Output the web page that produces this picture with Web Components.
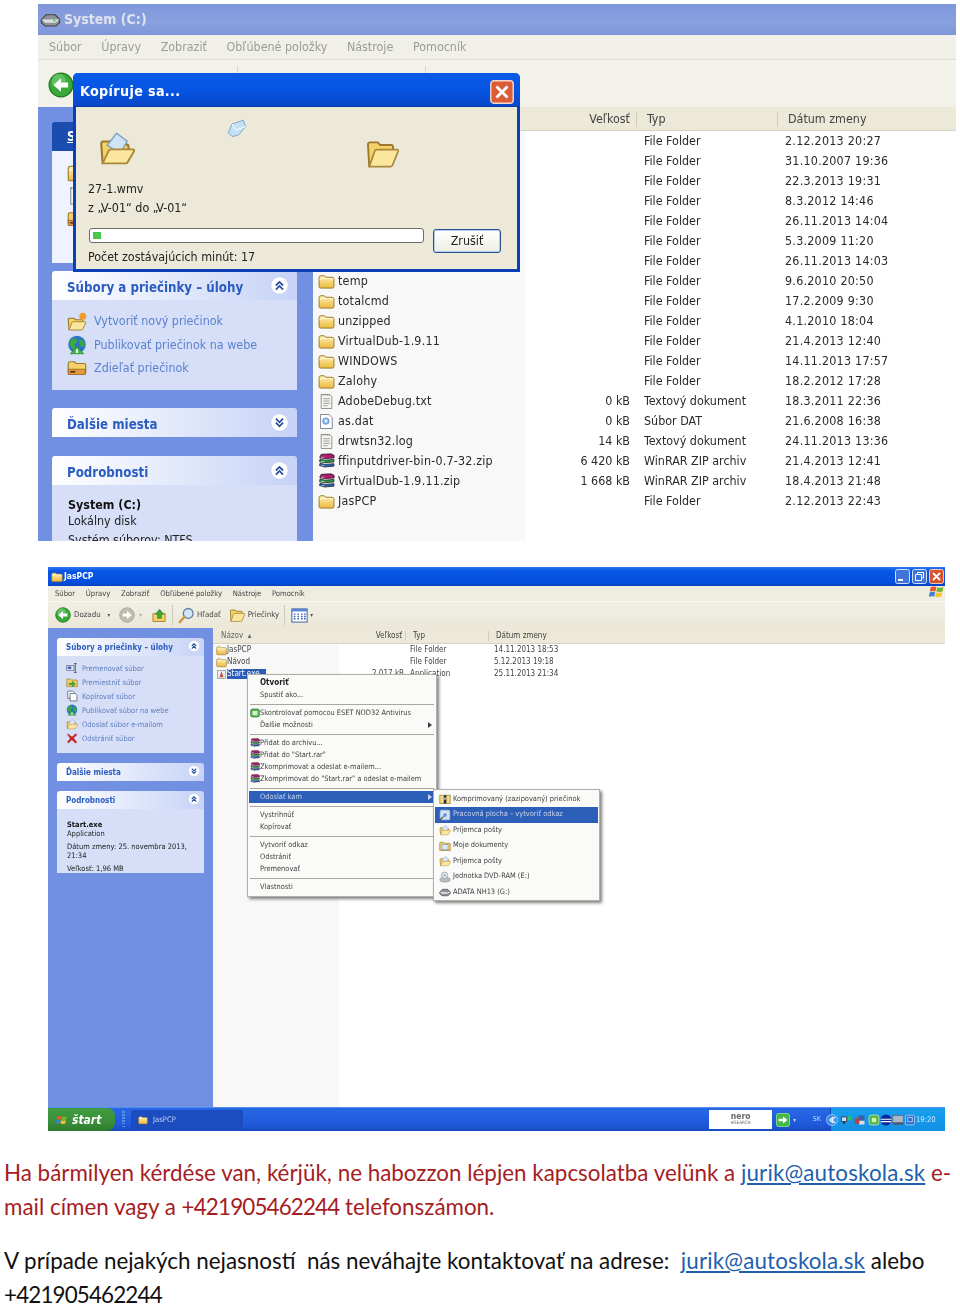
<!DOCTYPE html>
<html lang="sk">
<head>
<meta charset="utf-8">
<title>Kopírovanie súborov</title>
<style>
  html, body { margin: 0; background: #fff; }
  body { width: 960px; height: 1306px; overflow: hidden; }
</style>
</head>
<body>

<xp-explorer id="system" style="--w:918px;--h:537px;--m:4px 0 0 38px;--ui:12.4px;--row-h:20px;--blur:.4px;
  --title-h:31px;--title-bg:linear-gradient(#7f97dc,#8aa0dd 60%,#7d95d8);--title-color:#dfe3ee;--title-size:14px;--title-weight:700;--title-pad:2px;--title-gap:3px;
  --menu-h:25px;--menu-bg:#f1f0e8;--menu-color:#9c9c98;--menu-size:12.4px;--menu-gap:19.6px;--menu-pad:11px;--bar-line:#dddcd2;
  --tool-h:47px;--tool-bg:#f2f1ea;
  --side-w:275px;--side-pad:15px 0 0 14px;--panel-gap:18px;--panel-w:245px;
  --head-h:29px;--head-size:13.2px;--head-pad:15px;--head-top:4px;--chev:19px;--chev-right:8px;--chev-top:5px;
  --task-h:23.4px;--task-size:12.4px;--task-icon:20px;--task-gap:7px;--body-pad:10px 0 0 15px;--task-color:#5b82cf;
  --list-head-h:24px;--head-top-pad:2px;--shade:212px;
  --cols:207px 105px 155px 1fr;--row-pad:5px;--name-gap:3px;--name-icon:17px;--type-pad:14px;--date-ls:.25px;--name-ls:.2px;
  --head-cols:323px 141px 140px 1fr;--head-text:10px;--head-r:6px;--list-color:#2a2a2a;">
  <xp-icon slot="title-icon" name="drive" size="21"></xp-icon>
  <span slot="title">System (C:)</span>
  <span slot="menu">Súbor</span><span slot="menu">Úpravy</span><span slot="menu">Zobraziť</span><span slot="menu">Obľúbené položky</span><span slot="menu">Nástroje</span><span slot="menu">Pomocník</span>
  <system-tools slot="tools"></system-tools>

  <xp-panel slot="side" heading="S" primary style="--panel-h:131px;--head-top:0px"><xp-task icon="folder"></xp-task><xp-task icon="txt"></xp-task><xp-task icon="share"></xp-task></xp-panel>
  <xp-panel slot="side" heading="Súbory a priečinky – úlohy" dir="up">
    <xp-task icon="newfolder">Vytvoriť nový priečinok</xp-task>
    <xp-task icon="globe">Publikovať priečinok na webe</xp-task>
    <xp-task icon="share">Zdieľať priečinok</xp-task>
    <div style="height:10px"></div>
  </xp-panel>
  <xp-panel slot="side" heading="Ďalšie miesta" dir="down"></xp-panel>
  <xp-panel slot="side" heading="Podrobnosti" dir="up" style="--body-pad:12px 0 0 16px;margin-top:1px">
    <xp-detail><b>System (C:)</b><br>Lokálny disk</xp-detail>
    <xp-detail style="margin-top:3px">Systém súborov: NTFS</xp-detail>
  </xp-panel>

  <span slot="head" class="r">Veľkosť</span><span slot="head">Typ</span><span slot="head">Dátum zmeny</span>

  <file-row slot="rows" type="File Folder" date="2.12.2013 20:27"></file-row>
  <file-row slot="rows" type="File Folder" date="31.10.2007 19:36"></file-row>
  <file-row slot="rows" type="File Folder" date="22.3.2013 19:31"></file-row>
  <file-row slot="rows" type="File Folder" date="8.3.2012 14:46"></file-row>
  <file-row slot="rows" type="File Folder" date="26.11.2013 14:04"></file-row>
  <file-row slot="rows" type="File Folder" date="5.3.2009 11:20"></file-row>
  <file-row slot="rows" type="File Folder" date="26.11.2013 14:03"></file-row>
  <file-row slot="rows" icon="folder" name="temp" type="File Folder" date="9.6.2010 20:50"></file-row>
  <file-row slot="rows" icon="folder" name="totalcmd" type="File Folder" date="17.2.2009 9:30"></file-row>
  <file-row slot="rows" icon="folder" name="unzipped" type="File Folder" date="4.1.2010 18:04"></file-row>
  <file-row slot="rows" icon="folder" name="VirtualDub-1.9.11" type="File Folder" date="21.4.2013 12:40"></file-row>
  <file-row slot="rows" icon="folder" name="WINDOWS" type="File Folder" date="14.11.2013 17:57"></file-row>
  <file-row slot="rows" icon="folder" name="Zalohy" type="File Folder" date="18.2.2012 17:28"></file-row>
  <file-row slot="rows" icon="txt" name="AdobeDebug.txt" size="0 kB" type="Textový dokument" date="18.3.2011 22:36"></file-row>
  <file-row slot="rows" icon="dat" name="as.dat" size="0 kB" type="Súbor DAT" date="21.6.2008 16:38"></file-row>
  <file-row slot="rows" icon="txt" name="drwtsn32.log" size="14 kB" type="Textový dokument" date="24.11.2013 13:36"></file-row>
  <file-row slot="rows" icon="rar" name="ffinputdriver-bin-0.7-32.zip" size="6 420 kB" type="WinRAR ZIP archiv" date="21.4.2013 12:41"></file-row>
  <file-row slot="rows" icon="rar" name="VirtualDub-1.9.11.zip" size="1 668 kB" type="WinRAR ZIP archiv" date="18.4.2013 21:48"></file-row>
  <file-row slot="rows" icon="folder" name="JasPCP" type="File Folder" date="2.12.2013 22:43"></file-row>

  <copy-dialog></copy-dialog>
</xp-explorer>

<xp-explorer id="jaspcp" style="--w:897px;--h:564px;--m:26px 0 0 48px;--ui:8px;--row-h:12px;--blur:.5px;
  --title-h:19px;--title-bg:linear-gradient(#2a7cf0,#0a55e6 20%,#0350e0 80%,#0a3fc0);--title-color:#fff;--title-size:8.5px;--title-weight:700;--title-pad:3px;--title-gap:1px;
  --menu-h:16px;--menu-bg:#efece0;--menu-color:#444;--menu-size:7.6px;--menu-gap:10.8px;--menu-pad:7px;--bar-line:#f7f6ee;
  --tool-h:26px;--tool-bg:linear-gradient(#f1efe5,#ebe8d9);
  --side-w:165px;--side-pad:10px 0 0 9px;--panel-gap:10px;--panel-w:147px;
  --head-h:18px;--head-size:8px;--head-pad:9px;--head-top:1px;--chev:12px;--chev-right:4px;--chev-top:2px;
  --task-h:14px;--task-size:7.5px;--task-icon:12px;--task-gap:4px;--body-pad:5px 0 0 9px;--task-color:#5f7fc0;
  --list-head-h:16px;--head-top-pad:1px;--shade:126px;
  --cols:126px 62px 90px 1fr;--row-pad:3px;--name-gap:0px;--name-icon:11px;--type-pad:6px;--date-ls:0px;--name-ls:0px;
  --head-cols:126px 66px 83px 1fr;--head-text:7px;--head-r:3px;--list-color:#444;">
  <xp-icon slot="title-icon" name="folder" size="12"></xp-icon>
  <span slot="title">JasPCP</span>
  <win-buttons slot="title-right"></win-buttons>
  <span slot="menu">Súbor</span><span slot="menu">Úpravy</span><span slot="menu">Zobraziť</span><span slot="menu">Obľúbené položky</span><span slot="menu">Nástroje</span><span slot="menu">Pomocník</span>
  <xp-icon slot="menu-right" name="flag" size="16"></xp-icon>
  <jaspcp-tools slot="tools"></jaspcp-tools>

  <xp-panel slot="side" heading="Súbory a priečinky – úlohy" dir="up">
    <xp-task icon="rename">Premenovať súbor</xp-task>
    <xp-task icon="move">Premiestniť súbor</xp-task>
    <xp-task icon="copy">Kopírovať súbor</xp-task>
    <xp-task icon="globe">Publikovať súbor na webe</xp-task>
    <xp-task icon="mail">Odoslať súbor e-mailom</xp-task>
    <xp-task icon="del">Odstrániť súbor</xp-task>
    <div style="height:8px"></div>
  </xp-panel>
  <xp-panel slot="side" heading="Ďalšie miesta" dir="down"></xp-panel>
  <xp-panel slot="side" heading="Podrobnosti" dir="up" style="--body-pad:11px 6px 0 10px">
    <xp-detail style="--lh:9px"><b>Start.exe</b><br>Application</xp-detail>
    <xp-detail style="--lh:9px;margin-top:4px">Dátum zmeny: 25. novembra 2013, 21:34</xp-detail>
    <xp-detail style="--lh:9px;margin:4px 0 7px">Veľkosť: 1,96 MB</xp-detail>
  </xp-panel>

  <span slot="head" class="n">Názov &nbsp;▴</span><span slot="head" class="r">Veľkosť</span><span slot="head">Typ</span><span slot="head">Dátum zmeny</span>
  <file-row slot="rows" icon="folder" name="JasPCP" type="File Folder" date="14.11.2013 18:53"></file-row>
  <file-row slot="rows" icon="folder" name="Návod" type="File Folder" date="5.12.2013 19:18"></file-row>
  <file-row slot="rows" icon="app" name="Start.exe" selected size="2 017 kB" type="Application" date="25.11.2013 21:34"></file-row>

  <xp-taskbar slot="bottom"></xp-taskbar>

  <xp-menu style="left:199px;top:107px;width:190px">
    <xp-item bold>Otvoriť</xp-item>
    <xp-item>Spustiť ako...</xp-item>
    <xp-sep></xp-sep>
    <xp-item icon="eset">Skontrolovať pomocou ESET NOD32 Antivirus</xp-item>
    <xp-item arrow>Ďalšie možnosti</xp-item>
    <xp-sep></xp-sep>
    <xp-item icon="rar">Přidat do archivu...</xp-item>
    <xp-item icon="rar">Přidat do "Start.rar"</xp-item>
    <xp-item icon="rar">Zkomprimovat a odeslat e-mailem...</xp-item>
    <xp-item icon="rar">Zkomprimovat do "Start.rar" a odeslat e-mailem</xp-item>
    <xp-sep></xp-sep>
    <xp-item arrow hi>Odoslať kam</xp-item>
    <xp-sep></xp-sep>
    <xp-item>Vystrihnúť</xp-item>
    <xp-item>Kopírovať</xp-item>
    <xp-sep></xp-sep>
    <xp-item>Vytvoriť odkaz</xp-item>
    <xp-item>Odstrániť</xp-item>
    <xp-item>Premenovať</xp-item>
    <xp-sep></xp-sep>
    <xp-item>Vlastnosti</xp-item>
  </xp-menu>
  <xp-menu style="left:385px;top:222px;width:167px;--item-h:15.5px;--item-pad:4px;--item-gap:2px;--item-icon:12px;--menu-box:1.5px 1px 0">
    <xp-item icon="zipfolder">Komprimovaný (zazipovaný) priečinok</xp-item>
    <xp-item icon="desktop" hi>Pracovná plocha – vytvoriť odkaz</xp-item>
    <xp-item icon="mail">Príjemca pošty</xp-item>
    <xp-item icon="docs">Moje dokumenty</xp-item>
    <xp-item icon="mail">Príjemca pošty</xp-item>
    <xp-item icon="dvd">Jednotka DVD-RAM (E:)</xp-item>
    <xp-item icon="drive">ADATA NH13 (G:)</xp-item>
  </xp-menu>
</xp-explorer>

<note-block>
  <note-para style="color:#a51d24">Ha bármilyen kérdése van, kérjük, ne habozzon lépjen kapcsolatba velünk a <a href="mailto:jurik@autoskola.sk">jurik@autoskola.sk</a> e-<wbr>mail címen vagy a <span class="num">+421905462244</span> telefonszámon.</note-para>
  <note-para style="color:#111">V prípade nejakých nejasností &nbsp;nás neváhajte kontaktovať na adrese: &nbsp;<a href="mailto:jurik@autoskola.sk">jurik@autoskola.sk</a> alebo <span class="num">+421905462244</span></note-para>
</note-block>

<script>
const UI_FONT = '"DejaVu Sans Condensed","DejaVu Sans","Liberation Sans",sans-serif';

const yellow = 'fill="#f6d16a" stroke="#9a7a2a" stroke-width=".9"';
const ICONS = {
    folder: `<defs><linearGradient id="fg" x1="0" y1="0" x2="0" y2="1"><stop offset="0" stop-color="#fff0b4"/><stop offset="1" stop-color="#eeb93e"/></linearGradient></defs><path d="M1 4.4Q1 2.6 2.8 2.6H6l1.4 1.4h6q1.6 0 1.6 1.6v7.2q0 1.4-1.4 1.4H2.4Q1 14.2 1 12.8z" fill="url(#fg)" stroke="#96782a" stroke-width=".9"/><path d="M1.8 6.2q.2-.9 1.2-.9h10q1 0 1.2.9" fill="none" stroke="#fff8d8" stroke-width=".9"/>`,
    openfolder: `<path d="M2 14.4 1.4 4q0-1 1-1H6l1.2 1.2h5q1 0 1 1V7" ${yellow}/><path d="M2 14.4 4.6 7q.2-.6 1-.6H15q.9 0 .6 .8L13 13.6q-.2.8-1 .8z" fill="#fbe69e" stroke="#a9883a" stroke-width=".8"/>`,
    srcfolder: `<path d="M2 14.4 1.4 6q0-1 1-1H6l1.2 1.2h5q1 0 1 1V9" ${yellow}/><path d="M4 6.6 8 1.4l4.6 3.4-3 5.4z" fill="#cfe3f5" stroke="#7f9fc0" stroke-width=".6"/><path d="M2 14.4 4.6 9q.2-.6 1-.6H15q.9 0 .6 .8L13 13.6q-.2.8-1 .8z" fill="#fbe69e" stroke="#a9883a" stroke-width=".8"/>`,
    flying: `<path d="M1 11 4 4l9-3 2 5-6 7-5 1z" fill="#c5e0f5" stroke="#7fa8cc" stroke-width=".8"/><path d="M4 4 7 9l8-3" fill="none" stroke="#fff" stroke-width=".8"/>`,
    txt: `<path d="M3 1.4h8l2 2v11.2H3z" fill="#f6f6ee" stroke="#8d938f" stroke-width=".9"/><path d="M5 5.4h6M5 7.6h6M5 9.8h6M5 12h4" stroke="#8a94a0" stroke-width=".8"/><path d="M3.6 1v1.6M5.4 1v1.6M7.2 1v1.6M9 1v1.6M10.8 1v1.6" stroke="#777" stroke-width=".5"/>`,
    dat: `<path d="M2.4 1.4h8l3 3v10.2h-11z" fill="#fff" stroke="#7e8590" stroke-width=".9"/><circle cx="7.4" cy="7.6" r="3" fill="#9cc4ec" stroke="#4f86c8" stroke-width=".8"/><circle cx="7.4" cy="7.6" r="1" fill="#fff"/>`,
    rar: `<path d="M3 1.2 12.4.8l2.8 1.4v2.4L6 5.4 1.6 4z" fill="#b01a6c" stroke="#222" stroke-width=".7"/><path d="M2 5.4 6 6.8l9-.8v2.4l-9 .8L1.4 8z" fill="#2a9a4a" stroke="#222" stroke-width=".7"/><path d="M2 9.4 6 10.8l9-.8v2.4l-9 .8-4.6-1.4z" fill="#2a62b8" stroke="#222" stroke-width=".7"/><path d="M3 4h3M3 8h3M3 12h3" stroke="#eee" stroke-width=".6"/>`,
    app: `<rect x="2" y="2" width="12" height="12" fill="#eee" stroke="#889"/><path d="M8 3.4 11 12H5z" fill="#c05050"/>`,
    back: `<circle cx="8" cy="8" r="7.3" fill="#3aa93a" stroke="#1c7a1c" stroke-width=".8"/><circle cx="6.6" cy="5.6" r="4.4" fill="#7ed67e" opacity=".55"/><path d="M3.4 8 8 3.8v2.6h4.4v3.2H8v2.6z" fill="#fff"/>`,
    forward: `<circle cx="8" cy="8" r="7.3" fill="#bdbdb2" stroke="#a2a298" stroke-width=".8"/><path d="M12.6 8 8 3.8v2.6H3.6v3.2H8v2.6z" fill="#fff"/>`,
    up: `<path d="M1 6h13v8.4H1z" ${yellow}/><path d="M8 1.4 12.4 6.6H10V11H6V6.6H3.6z" fill="#3aa93a" stroke="#1c7a1c" stroke-width=".6"/>`,
    search: `<circle cx="9.6" cy="6" r="4.6" fill="#cfe6f8" stroke="#5f7f9f" stroke-width="1.2"/><path d="M6.2 9.2 1.6 14.2" stroke="#c79a3a" stroke-width="2.2" stroke-linecap="round"/>`,
    views: `<rect x=".8" y="1.8" width="14.4" height="12.4" fill="#fff" stroke="#4a6aa8" stroke-width="1"/><rect x=".8" y="1.8" width="14.4" height="2.4" fill="#5a86d0"/><path d="M3.4 6v6M6.8 6v6M10.2 6v6M13 6v6" stroke="#3f66b4" stroke-width="1.6" stroke-dasharray="1.4 .8"/>`,
    newfolder: `<path d="M1.6 14.4 1 6q0-1 1-1h3.6l1.2 1.2h5q1 0 1 1V8" ${yellow}/><path d="M1.6 14.4 4 8.4q.2-.6 1-.6h9.4q.9 0 .6 .8l-2.4 5q-.2.8-1 .8z" fill="#fbe69e" stroke="#a9883a" stroke-width=".8"/><circle cx="12.6" cy="3.4" r="2.8" fill="#f59a2c"/>`,
    globe: `<circle cx="8" cy="7.6" r="7" fill="#2d74c9"/><path d="M3 3.2 7.4 2.4l1 3-2.6 2.6 1.6 3-2.6 1L2 8zM10 3l3.6 2.4.8 3.2-3 1.4-1.4-3z" fill="#39a845"/><path d="M8 9.2 13.4 15H2.6z" fill="#48b84e" stroke="#1c7a1c" stroke-width=".5"/><path d="M8 11.4v3" stroke="#fff" stroke-width="1.4"/>`,
    share: `<path d="M1 4.2Q1 3 2.2 3H6l1.4 1.4h6.4q1.2 0 1.2 1.2v6.2H1z" ${yellow}/><path d="M1 9h13.6v4.2H1z" fill="#e69a3a" stroke="#8a5a1a" stroke-width=".6"/><path d="M2.6 11h4" stroke="#422" stroke-width="1.2"/>`,
    rename: `<rect x="1" y="4.4" width="9.6" height="7" fill="#dde6f4" stroke="#556" stroke-width=".8"/><rect x="2.4" y="6" width="4.6" height="3.4" fill="#3a62b8"/><path d="M12.4 2v12M10.8 2h3.2M10.8 14h3.2" stroke="#333" stroke-width="1"/>`,
    move: `<path d="M1 4h5l1.4 1.4H15v8.8H1z" ${yellow}/><path d="M4 9.6h4.4V7l4.4 3.6-4.4 3.6v-2.4H4z" fill="#46a83a" stroke="#1c7a1c" stroke-width=".5"/>`,
    copy: `<path d="M2.4 1.4h6.8l2.4 2.4v7.4H2.4z" fill="#fff" stroke="#4b5568"/><path d="M5.4 4.6h6.8l2.4 2.4v7.6H5.4z" fill="#fff" stroke="#4b5568"/>`,
    mail: `<path d="M2 14.4 1.4 6q0-1 1-1H6l1.2 1.2h5q1 0 1 1V9" ${yellow}/><path d="M4 6.6 8 2l4.6 3-3 5z" fill="#dceaf7" stroke="#7f9fc0" stroke-width=".6"/><path d="M2 14.4 4.6 9q.2-.6 1-.6H15q.9 0 .6 .8L13 13.6q-.2.8-1 .8z" fill="#fbe69e" stroke="#a9883a" stroke-width=".6"/>`,
    del: `<path d="M2.2 2.2 8 6.6l5-4.4 1.6 1.4-4.6 4.6 4.6 5.6-2.2 1-4.6-4.6-4.4 4.6-1.6-1.4 4-4.8-3.4-4.6z" fill="#d21e1e" stroke="#8a1010" stroke-width=".4"/>`,
    eset: `<rect x="1" y="1.6" width="14" height="12.8" rx="3" fill="#53b553" stroke="#1c6a3a"/><rect x="4" y="4.6" width="8" height="7" rx="1" fill="#d6f2c4"/>`,
    zipfolder: `<path d="M1 3h14v11H1z" fill="#f3d97f" stroke="#7a6a2a" stroke-width=".8"/><rect x="6.4" y="3" width="3.4" height="11" fill="#2a2a2a"/><rect x="7.2" y="6" width="1.8" height="3" fill="#eee"/>`,
    desktop: `<rect x="1.4" y="1.4" width="13.2" height="13.2" rx="1.6" fill="#d2e0f3" stroke="#7f9fc8"/><circle cx="8" cy="8" r="3.4" fill="#6c97d4" stroke="#fff"/><path d="M1.6 14.4 6 10" stroke="#234" stroke-width="1.4"/>`,
    docs: `<path d="M1 4q0-1 1-1h4l1.4 1.4H14q1 0 1 1V14H1z" ${yellow}/><rect x="4" y="6" width="8" height="7" fill="#dfe8f6" stroke="#6f8fb8" stroke-width=".7"/>`,
    dvd: `<ellipse cx="8" cy="11.6" rx="7" ry="3.2" fill="#b9bcc2" stroke="#777" stroke-width=".6"/><circle cx="7.4" cy="5.8" r="4.4" fill="#dfe3ea" stroke="#8a8f99" stroke-width=".8"/><circle cx="7.4" cy="5.8" r="1.2" fill="#8a8f99"/>`,
    drive: `<path d="M1 8 4.6 4.4h7L15 8v2.4L12 13H4L1 10.4z" fill="#8f9196" stroke="#3f4146" stroke-width=".8"/><path d="M1.2 8h13.6l-3 2.4H4z" fill="#dfe0e3"/><circle cx="11" cy="9" r=".8" fill="#3c3"/>`,
    flag: `<path d="M1.6 3.4Q4 1.8 7.4 3L6.4 7.4Q3.6 6.4 .8 7.6z" fill="#e8582c"/><path d="M8.2 3.2q2.8 1.2 6.2-.2l-.9 4.4Q10 8.6 7.2 7.6z" fill="#74b82e"/><path d="M.6 8.4q2.8-1.2 5.6-.2l-.9 4.4Q2.4 11.6 0 12.8z" fill="#3c82dc"/><path d="M7 8.4q2.8 1 6.2-.2l-1 4.4q-3.2 1.2-6.2.2z" fill="#f8c52c"/>`,
    arrowbtn: `<rect x=".6" y=".6" width="14.8" height="14.8" rx="2" fill="#43b84a" stroke="#8fd98f"/><path d="M3 6.6h5V3.6L13 8l-5 4.4V9.4H3z" fill="#fff"/>`,
    trayback: `<circle cx="8" cy="8" r="7.4" fill="#3f8fe8" stroke="#bfe0ff" stroke-width=".8"/><path d="M9.6 3.8 5.2 8l4.4 4.2M12.4 3.8 8 8l4.4 4.2" fill="none" stroke="#fff" stroke-width="1.4"/>`,
    traynet: `<rect x="2" y="4" width="7" height="6" fill="#cfe0f2" stroke="#333"/><rect x="4" y="10" width="3" height="3" fill="#333"/><path d="M11 8q2-2 0-5M13 9q3-3 0-7" fill="none" stroke="#3d3" stroke-width="1.2"/>`,
    tray2: `<rect x="1" y="5" width="8" height="8" fill="#c04040"/><rect x="6" y="2" width="8" height="7" fill="#3d5fa0"/><rect x="7" y="9" width="7" height="5" fill="#ddd"/>`,
    tray3: `<rect x="1.4" y="1.4" width="13.2" height="13.2" rx="3" fill="#49b449" stroke="#d8f0c8"/><rect x="5" y="5" width="6" height="6" fill="#d8f0a8"/>`,
    tray4: `<circle cx="8" cy="8" r="7.4" fill="#0a2a9a"/><path d="M.8 6.2h14.4v1.6H.8zM1 9.4h14v1.6H1z" fill="#fff"/>`,
    tray5: `<rect x="1" y="2" width="14" height="9.6" fill="#aab7c6" stroke="#667"/><rect x="1" y="11.6" width="14" height="2.6" fill="#556"/>`,
    tray6: `<rect x="2" y="1.6" width="12" height="12.8" rx="1.4" fill="#2a6fd0" stroke="#bcd8f8"/><rect x="5" y="4.4" width="6" height="6" fill="none" stroke="#cfe4ff"/>`
};

class XpIcon extends HTMLElement {
    constructor(){
        super();
        this.attachShadow({mode: 'open'});
        const size = this.getAttribute('size');
        if(size){
            this.style.setProperty('--icon-size', size + 'px');
        }
        this.shadowRoot.innerHTML = `
            <style>
                :host { display: inline-flex; flex: none; width: var(--icon-size, 16px); height: var(--icon-size, 16px); }
                svg { width: 100%; height: 100%; display: block; }
            </style>
            <svg viewBox="0 0 16 16" aria-hidden="true">${ICONS[this.getAttribute('name')] || ''}</svg>`;
    }
}
customElements.define('xp-icon', XpIcon);

const explorerTemplate = document.createElement('template');
explorerTemplate.innerHTML = `
    <style>
        :host {
            display: flex; flex-direction: column; position: relative; overflow: hidden;
            width: var(--w); height: var(--h); margin: var(--m);
            font: var(--ui)/1.2 ${UI_FONT}; filter: blur(var(--blur));
        }
        .title { display: flex; align-items: center; flex: none; height: var(--title-h); background: var(--title-bg);
            color: var(--title-color); font-size: var(--title-size); font-weight: var(--title-weight); padding-left: var(--title-pad); gap: var(--title-gap); }
        .title .right { margin-left: auto; }
        .menu { display: flex; align-items: center; flex: none; height: var(--menu-h); background: var(--menu-bg); color: var(--menu-color); font-size: var(--menu-size);
            gap: var(--menu-gap); padding-left: var(--menu-pad); border-bottom: 1px solid var(--bar-line); box-sizing: border-box; }
        .menu .right { margin-left: auto; }
        .tools { flex: none; height: var(--tool-h); background: var(--tool-bg); }
        .main { flex: 1; display: flex; min-height: 0; }
        .side { flex: none; box-sizing: border-box; width: var(--side-w); padding: var(--side-pad); background: #7190e2;
            display: flex; flex-direction: column; gap: var(--panel-gap); overflow: hidden; }
        .list { flex: 1; background: linear-gradient(90deg, #f8f8f8 var(--shade), #fff 0); color: var(--list-color); min-width: 0; }
        .head { display: grid; grid-template-columns: var(--head-cols); align-items: center; height: var(--list-head-h);
            background: #ece9d8; border-bottom: 1px solid #d6d3c2; box-sizing: border-box; padding-top: var(--head-top-pad); }
        ::slotted([slot=head]) { padding-left: var(--head-text); border-left: 1px solid #cfccba; color: #444; }
        ::slotted(.r) { text-align: right; padding-left: 0; padding-right: var(--head-r); border: 0; }
        ::slotted(.n) { border: 0; padding-left: 8px; color: #666; }
    </style>
    <div class="title"><slot name="title-icon"></slot><slot name="title"></slot><span class="right"><slot name="title-right"></slot></span></div>
    <div class="menu"><slot name="menu"></slot><span class="right"><slot name="menu-right"></slot></span></div>
    <div class="tools"><slot name="tools"></slot></div>
    <div class="main">
        <div class="side"><slot name="side"></slot></div>
        <div class="list">
            <div class="head"><slot name="head"></slot></div>
            <slot name="rows"></slot>
        </div>
    </div>
    <slot name="bottom"></slot>
    <slot></slot>
`;
class XpExplorer extends HTMLElement {
    constructor(){
        super();
        this.attachShadow({mode: 'open'});
        this.shadowRoot.appendChild(explorerTemplate.content.cloneNode(true));
    }
}
customElements.define('xp-explorer', XpExplorer);

class XpPanel extends HTMLElement {
    constructor(){
        super();
        this.attachShadow({mode: 'open'});
        const dir = this.getAttribute('dir');
        const chev = dir === 'up'
            ? '<path d="M5 8 8 5l3 3M5 11.4l3-3 3 3"/>'
            : '<path d="M5 4.8 8 7.8l3-3M5 8.2l3 3 3-3"/>';
        const primary = this.hasAttribute('primary');
        this.shadowRoot.innerHTML = `
            <style>
                :host { display: block; position: relative; flex: none; width: var(--panel-w); height: var(--panel-h, auto); }
                .head { display: flex; align-items: center; box-sizing: border-box; height: var(--head-h); padding: var(--head-top) 0 0 var(--head-pad);
                    font-size: var(--head-size); font-weight: 700; color: #2b5cc0; border-radius: 3px 3px 0 0;
                    background: linear-gradient(90deg, #fff, #c6d3f7); }
                .head.primary { background: linear-gradient(90deg, #1a4cae, #2a60c8); color: #fff; text-decoration: underline; }
                .chev { position: absolute; right: var(--chev-right); top: var(--chev-top); width: var(--chev); height: var(--chev); }
                .chev path { fill: none; stroke: #2a4f9a; stroke-width: 1.5; }
                .body { padding: var(--body-pad); background: #d6dff7; }
                .body.primary { height: 102px; background: #eff3ff; }
            </style>
            <div class="head ${primary ? 'primary' : ''}">${this.getAttribute('heading')}</div>
            ${dir ? `<svg class="chev" viewBox="0 0 16 16" aria-hidden="true"><circle cx="8" cy="8" r="7.4" fill="#fff" stroke="#c0cdea" stroke-width=".7"/>${chev}</svg>` : ''}
            ${this.children.length ? `<div class="body ${primary ? 'primary' : ''}"><slot></slot></div>` : ''}`;
    }
}
customElements.define('xp-panel', XpPanel);

class XpTask extends HTMLElement {
    constructor(){
        super();
        this.attachShadow({mode: 'open'});
        this.shadowRoot.innerHTML = `
            <style>
                :host { display: flex; align-items: center; gap: var(--task-gap); height: var(--task-h);
                    font-size: var(--task-size); color: var(--task-color); white-space: nowrap; --icon-size: var(--task-icon); }
            </style>
            <xp-icon name="${this.getAttribute('icon')}"></xp-icon><slot></slot>`;
    }
}
customElements.define('xp-task', XpTask);

class XpDetail extends HTMLElement {
    constructor(){
        super();
        this.attachShadow({mode: 'open'});
        this.shadowRoot.innerHTML = `
            <style>
                :host { display: block; color: #222; font-size: var(--task-size); line-height: var(--lh, 16px); }
                ::slotted(b) { color: #111; }
            </style>
            <slot></slot>`;
    }
}
customElements.define('xp-detail', XpDetail);

class FileRow extends HTMLElement {
    constructor(){
        super();
        this.attachShadow({mode: 'open'});
        const a = n => this.getAttribute(n) || '';
        const name = a('name');
        this.shadowRoot.innerHTML = `
            <style>
                :host { display: grid; grid-template-columns: var(--cols); align-items: center; height: var(--row-h);
                    padding-left: var(--row-pad); white-space: nowrap; }
                .name { display: flex; align-items: center; gap: var(--name-gap); letter-spacing: var(--name-ls); --icon-size: var(--name-icon); }
                .name.sel span { background: #2a5cb8; color: #fff; padding-right: 6px; }
                .size { text-align: right; }
                .type { padding-left: var(--type-pad); }
                .date { letter-spacing: var(--date-ls); }
            </style>
            <div class="name ${this.hasAttribute('selected') ? 'sel' : ''}">${name ? `<xp-icon name="${a('icon')}"></xp-icon><span>${name}</span>` : ''}</div>
            <div class="size">${a('size')}</div>
            <div class="type">${a('type')}</div>
            <div class="date">${a('date')}</div>`;
    }
}
customElements.define('file-row', FileRow);

class SystemTools extends HTMLElement {
    constructor(){
        super();
        this.attachShadow({mode: 'open'});
        this.shadowRoot.innerHTML = `
            <style>
                :host { display: flex; align-items: center; height: 100%; padding: 3px 0 0 10px; box-sizing: border-box; }
                .sep { width: 1px; height: 22px; background: #d8d7cc; align-self: flex-start; margin-top: 3px; }
            </style>
            <xp-icon name="back" size="26"></xp-icon>
            <div class="sep" style="margin-left:163px"></div>
            <div class="sep" style="margin-left:187px"></div>`;
    }
}
customElements.define('system-tools', SystemTools);

class JaspcpTools extends HTMLElement {
    constructor(){
        super();
        this.attachShadow({mode: 'open'});
        this.shadowRoot.innerHTML = `
            <style>
                :host { display: flex; align-items: center; height: 100%; padding-left: 7px; box-sizing: border-box; color: #444; font-size: 7.8px; }
                .sep { width: 1px; height: 20px; background: #cfccba; margin: 0 5px; }
                .d { font-size: 6px; color: #555; }
            </style>
            <xp-icon name="back" size="16"></xp-icon><span style="margin-left:3px">Dozadu</span><span class="d" style="margin-left:7px">▾</span>
            <xp-icon name="forward" size="16" style="margin-left:9px"></xp-icon><span class="d" style="margin-left:4px;color:#aaa">▾</span>
            <xp-icon name="up" size="15" style="margin-left:10px"></xp-icon>
            <div class="sep"></div>
            <xp-icon name="search" size="17"></xp-icon><span style="margin-left:2px">Hľadať</span>
            <xp-icon name="openfolder" size="16" style="margin-left:8px"></xp-icon><span style="margin-left:3px">Priečinky</span>
            <div class="sep"></div>
            <xp-icon name="views" size="17" style="margin-left:1px"></xp-icon><span class="d" style="margin-left:2px">▾</span>`;
    }
}
customElements.define('jaspcp-tools', JaspcpTools);

class WinButtons extends HTMLElement {
    constructor(){
        super();
        this.attachShadow({mode: 'open'});
        this.shadowRoot.innerHTML = `
            <style>
                :host { display: flex; gap: 2px; padding-right: 1px; }
                svg { width: 15px; height: 15px; display: block; }
            </style>
            <svg viewBox="0 0 15 15"><rect x=".5" y=".5" width="14" height="14" rx="2" fill="#3f74d8" stroke="#cfe0fa"/><rect x="3" y="10" width="5" height="2" fill="#fff"/></svg>
            <svg viewBox="0 0 15 15"><rect x=".5" y=".5" width="14" height="14" rx="2" fill="#3f74d8" stroke="#cfe0fa"/><path d="M5.5 5V3.5h6V9H10M3.5 5.5h6V11.5h-6z" fill="none" stroke="#fff"/></svg>
            <svg viewBox="0 0 15 15"><rect x=".5" y=".5" width="14" height="14" rx="2" fill="#d9532c" stroke="#f0c8b8"/><path d="m4 4 7 7m0-7-7 7" stroke="#fff" stroke-width="1.8"/></svg>`;
    }
}
customElements.define('win-buttons', WinButtons);

class CopyDialog extends HTMLElement {
    constructor(){
        super();
        this.attachShadow({mode: 'open'});
        this.shadowRoot.innerHTML = `
            <style>
                :host { position: absolute; left: 35px; top: 69px; width: 447px; height: 199px; box-sizing: border-box;
                    display: flex; flex-direction: column; border: 3px solid #0b3fb8; border-top: 0; border-radius: 5px 5px 0 0; background: #ece9d8; color: #222; font-size: 12.4px; }
                .bar { flex: none; display: flex; align-items: center; justify-content: space-between; height: 34px; padding: 4px 0 0 7px; box-sizing: border-box; margin: 0 -3px;
                    background: linear-gradient(#0a5ae8, #0655e4 50%, #0a47c8); border-bottom: 1px solid #083aa8; border-radius: 5px 5px 0 0; color: #fff; font-size: 14.2px; font-weight: 700; letter-spacing: .35px; }
                .close { width: 24px; height: 24px; margin-right: 6px; }
                .icons { position: relative; display: flex; height: 63px; padding: 23px 0 0 22px; gap: 230px; box-sizing: border-box; }
                .icons xp-icon { align-self: flex-start; }
                .fly { position: absolute; left: 151px; top: 12px; }
                .lines { padding: 9px 0 0 12px; line-height: 19px; }
                .bottom { display: grid; grid-template-columns: 1fr auto; padding: 11px 16px 0 13px; column-gap: 9px; }
                .track { align-self: start; height: 15px; box-sizing: border-box; border: 1px solid #6d6d62; border-radius: 3px; background: #fff; padding: 3px; }
                .track i { display: block; width: 8px; height: 7px; background: #49c849; }
                .btn { grid-row: span 2; box-sizing: border-box; width: 68px; height: 24px; margin-top: 1px; display: flex; align-items: center; justify-content: center;
                    border: 1.5px solid #2b4f8f; border-radius: 3px; background: linear-gradient(#fff, #efeee4); box-shadow: inset 0 0 0 1px #b4cdf0; }
                .left { margin: 7px 0 0 -1px; }
            </style>
            <div class="bar"><span>Kopíruje sa...</span>
                <svg class="close" viewBox="0 0 24 24"><rect x=".8" y=".8" width="22.4" height="22.4" rx="3" fill="#dc5c38" stroke="#f6d8cc" stroke-width="1.4"/><path d="m6.5 6.5 11 11m0-11-11 11" stroke="#fff" stroke-width="2.8"/></svg>
            </div>
            <div class="icons"><xp-icon name="srcfolder" size="37"></xp-icon><xp-icon class="fly" name="flying" size="20"></xp-icon><xp-icon name="openfolder" size="34" style="margin-top:6px"></xp-icon></div>
            <div class="lines">27-1.wmv<br>z „V-01“ do „V-01“</div>
            <div class="bottom">
                <div class="track"><i></i></div>
                <div class="btn">Zrušiť</div>
                <div class="left">Počet zostávajúcich minút: 17</div>
            </div>`;
    }
}
customElements.define('copy-dialog', CopyDialog);

class XpMenu extends HTMLElement {
    constructor(){
        super();
        this.attachShadow({mode: 'open'});
        this.shadowRoot.innerHTML = `
            <style>
                :host { position: absolute; box-sizing: border-box; padding: var(--menu-box, 2px 1px 3px); background: #fafaf8; color: #3f3f3f;
                    border: 1px solid #b0b0a8; box-shadow: 2px 2px 3px rgba(0,0,0,.5); white-space: nowrap; font-size: 7.4px; }
            </style>
            <slot></slot>`;
    }
}
customElements.define('xp-menu', XpMenu);

class XpItem extends HTMLElement {
    constructor(){
        super();
        this.attachShadow({mode: 'open'});
        const icon = this.getAttribute('icon');
        this.shadowRoot.innerHTML = `
            <style>
                :host { display: flex; align-items: center; height: var(--item-h, 12px); padding-left: var(--item-pad, 1px); gap: var(--item-gap, 0px); --icon-size: var(--item-icon, 10px); }
                :host([hi]) { background: #2d5fb8; color: #c9d4ea; }
                :host([bold]) { font-weight: 700; color: #222; font-size: 8px; }
                .gap { width: var(--item-icon, 10px); flex: none; }
                .arrow { margin-left: auto; margin-right: 3px; width: 0; height: 0; border: 3px solid transparent; border-right: 0; border-left: 4px solid currentColor; }
            </style>
            ${icon ? `<xp-icon name="${icon}"></xp-icon>` : '<span class="gap"></span>'}
            <span><slot></slot></span>
            ${this.hasAttribute('arrow') ? '<span class="arrow"></span>' : ''}`;
    }
}
customElements.define('xp-item', XpItem);

class XpSep extends HTMLElement {
    constructor(){
        super();
        this.attachShadow({mode: 'open'}).innerHTML = `
            <style>
                :host { display: flex; align-items: center; height: 6px; }
                div { flex: 1; height: 1px; background: #a8a89e; margin: 0 1px; }
            </style>
            <div></div>`;
    }
}
customElements.define('xp-sep', XpSep);

class XpTaskbar extends HTMLElement {
    constructor(){
        super();
        this.attachShadow({mode: 'open'});
        this.shadowRoot.innerHTML = `
            <style>
                :host { display: flex; align-items: stretch; flex: none; height: 24px; box-sizing: border-box; border-top: 1px solid #4f8ff0;
                    background: linear-gradient(#2768e4, #1f5adc 70%, #184ac0); color: #fff; font-size: 7.6px; }
                .start { display: flex; align-items: center; gap: 4px; width: 67px; box-sizing: border-box; padding-left: 8px; border-radius: 0 8px 8px 0;
                    background: linear-gradient(#3f9c3f, #3a8f3a 60%, #2d7a2d); font: italic 700 12px ${UI_FONT}; }
                .grip { width: 3px; margin: 3px 6px 3px 7px; background: repeating-linear-gradient(#5c8fe8 0 1.5px, transparent 0 3px); }
                .task { display: flex; align-items: center; gap: 5px; width: 112px; padding-left: 7px; margin: 2px 0; box-sizing: border-box; background: #1c4cbe; border-radius: 2px; color: #c5d3f2; }
                .nero { margin: 2px 0 2px auto; width: 63px; background: #fff; color: #666; display: flex; flex-direction: column; align-items: center; justify-content: center; }
                .nero b { font-size: 8.5px; line-height: 7px; }
                .nero span { font-size: 4.6px; line-height: 6px; }
                .quick { display: flex; align-items: center; gap: 3px; margin-left: 4px; }
                .lang { display: flex; align-items: center; margin-left: 17px; color: #c5d3f2; font-size: 7px; }
                .tray { display: flex; align-items: center; width: 115px; box-sizing: border-box; margin-left: 9px; background: linear-gradient(#17a0ee, #138fe4); border-left: 1px solid #0a4fb0; color: #cfe6fa; }
                .clock { margin-left: auto; padding-right: 10px; }
            </style>
            <div class="start"><xp-icon name="flag" size="12"></xp-icon><span>štart</span></div>
            <div class="grip"></div>
            <div class="task"><xp-icon name="folder" size="10"></xp-icon>JasPCP</div>
            <div class="nero"><b>nero</b><span>⊕SEARCH</span></div>
            <div class="quick"><xp-icon name="arrowbtn" size="14"></xp-icon><span style="font-size:6px;color:#cfe0fa">▾</span></div>
            <div class="lang">SK</div>
            <div class="tray">
                <xp-icon name="trayback" size="12" style="margin-left:-5px"></xp-icon>
                <xp-icon name="traynet" size="12" style="margin-left:2px"></xp-icon><xp-icon name="tray2" size="12" style="margin-left:2px"></xp-icon>
                <xp-icon name="tray3" size="12" style="margin-left:2px"></xp-icon><xp-icon name="tray4" size="12"></xp-icon>
                <xp-icon name="tray5" size="12"></xp-icon><xp-icon name="tray6" size="12"></xp-icon>
                <span class="clock">19:20</span>
            </div>`;
    }
}
customElements.define('xp-taskbar', XpTaskbar);

class NoteBlock extends HTMLElement {
    constructor(){
        super();
        this.attachShadow({mode: 'open'}).innerHTML = `
            <style>
                :host { display: flex; flex-direction: column; gap: 20px; margin-top: 25px; padding: 0 6px 0 4px; font: 22.4px/34px Lato, "Open Sans", sans-serif; }
            </style>
            <slot></slot>`;
    }
}
customElements.define('note-block', NoteBlock);

class NotePara extends HTMLElement {
    constructor(){
        super();
        this.attachShadow({mode: 'open'}).innerHTML = `
            <style>
                :host { display: block; }
                ::slotted(a) { color: #1f5fae; text-decoration: underline; letter-spacing: .15px; }
                ::slotted(.num) { letter-spacing: -.85px; }
            </style>
            <slot></slot>`;
    }
}
customElements.define('note-para', NotePara);
</script>
</body>
</html>
